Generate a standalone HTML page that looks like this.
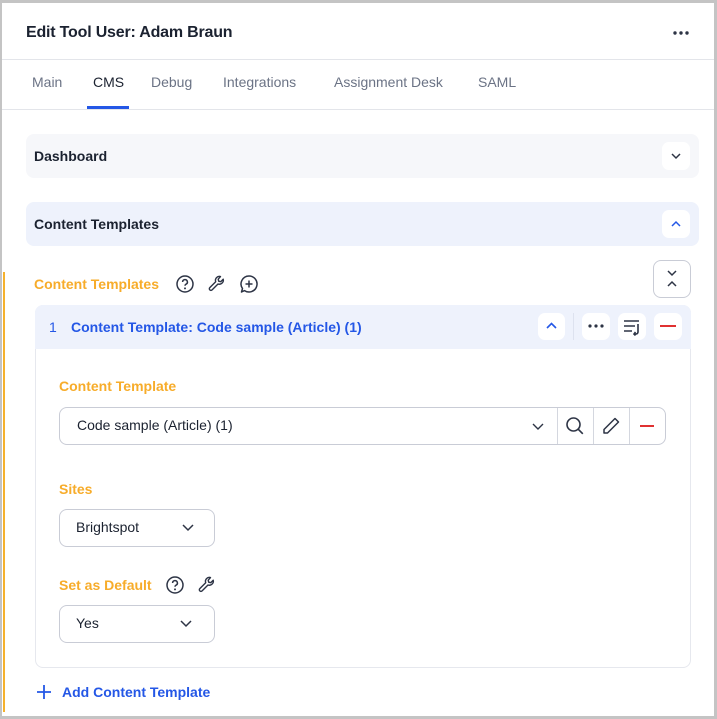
<!DOCTYPE html>
<html><head><meta charset="utf-8"><style>
*{box-sizing:border-box;margin:0;padding:0}
body{width:717px;height:719px;background:#c4c4c4;font-family:"Liberation Sans",sans-serif;position:relative;overflow:hidden}
.page{position:absolute;left:2px;top:3px;width:712px;height:713px;background:#fff}
.a{position:absolute}
.t{position:absolute;white-space:nowrap}
.btn{position:absolute;background:#fff;border-radius:7px}
svg{position:absolute}
</style></head><body>
<div class="page"></div>
<div class="t" style="left:26px;top:24px;font-size:16px;font-weight:bold;color:#1b2230;letter-spacing:-0.2px">Edit Tool User: Adam Braun</div>
<svg style="left:672px;top:30px" width="18" height="6"><circle cx="3" cy="3" r="1.7" fill="#2d3445"/><circle cx="9" cy="3" r="1.7" fill="#2d3445"/><circle cx="15" cy="3" r="1.7" fill="#2d3445"/></svg>
<div class="a" style="left:2px;top:59px;width:712px;height:1px;background:#e3e5ea"></div>
<div class="t" style="left:32px;top:74px;font-size:14px;color:#6b7385">Main</div>
<div class="t" style="left:93px;top:74px;font-size:14px;color:#1b2230">CMS</div>
<div class="t" style="left:151px;top:74px;font-size:14px;color:#6b7385">Debug</div>
<div class="t" style="left:223px;top:74px;font-size:14px;color:#6b7385">Integrations</div>
<div class="t" style="left:334px;top:74px;font-size:14px;color:#6b7385">Assignment Desk</div>
<div class="t" style="left:478px;top:74px;font-size:14px;color:#6b7385">SAML</div>
<div class="a" style="left:87px;top:106px;width:42px;height:3px;background:#2457e6"></div>
<div class="a" style="left:2px;top:109px;width:712px;height:1px;background:#e3e5ea"></div>

<div class="a" style="left:26px;top:134px;width:673px;height:44px;background:#f6f7fa;border-radius:8px"></div>
<div class="t" style="left:34px;top:148px;font-size:14px;font-weight:bold;color:#1b2230">Dashboard</div>
<div class="btn" style="left:662px;top:142px;width:28px;height:28px"></div>
<svg style="left:670px;top:150px" width="12" height="12"><path d="M2 4l4 4 4-4" fill="none" stroke="#2d3445" stroke-width="1.5"/></svg>

<div class="a" style="left:26px;top:202px;width:673px;height:44px;background:#eef2fc;border-radius:8px"></div>
<div class="t" style="left:34px;top:216px;font-size:14px;font-weight:bold;color:#1b2230">Content Templates</div>
<div class="btn" style="left:662px;top:210px;width:28px;height:28px"></div>
<svg style="left:670px;top:218px" width="12" height="12"><path d="M2 8l4-4 4 4" fill="none" stroke="#2457e6" stroke-width="1.5"/></svg>

<div class="a" style="left:3px;top:272px;width:2px;height:440px;background:#f5b12d"></div>
<div class="t" style="left:34px;top:276px;font-size:14px;font-weight:bold;color:#f7ac2a">Content Templates</div>
<svg style="left:175px;top:274px" width="20" height="20"><circle cx="10" cy="10" r="8" fill="none" stroke="#2d3445" stroke-width="1.5"/><path d="M7.6 8a2.4 2.4 0 1 1 3.4 2.2c-.7.4-1 .8-1 1.6" fill="none" stroke="#2d3445" stroke-width="1.5"/><circle cx="10" cy="14.4" r="1" fill="#2d3445"/></svg>
<svg style="left:207px;top:274px" width="20" height="20"><path d="M13.5 2.5a4 4 0 0 0-4.8 5.2L2.8 13.6a1.6 1.6 0 0 0 2.3 2.3l5.9-5.9a4 4 0 0 0 5.2-4.8l-2.5 2.5-2-.5-.5-2z" fill="none" stroke="#2d3445" stroke-width="1.4" stroke-linejoin="round"/></svg>
<svg style="left:239px;top:274px" width="20" height="20"><path d="M10 2a8 8 0 1 1-4.5 14.6L2.5 18l1-3.4A8 8 0 0 1 10 2z" fill="none" stroke="#2d3445" stroke-width="1.5" stroke-linejoin="round"/><path d="M10 6.5v7M6.5 10h7" stroke="#2d3445" stroke-width="1.5"/></svg>
<div class="a" style="left:653px;top:260px;width:38px;height:38px;border:1px solid #c9ccd6;border-radius:8px;background:#fff"></div>
<svg style="left:665px;top:268px" width="14" height="22"><path d="M3 3l4 4 4-4M3 18l4-4 4 4" fill="none" stroke="#2d3445" stroke-width="1.5"/></svg>

<div class="a" style="left:35px;top:305px;width:656px;height:363px;border:1px solid #e6e8ee;border-radius:8px"></div>
<div class="a" style="left:35px;top:305px;width:656px;height:44px;background:#eef2fc;border-radius:8px 8px 0 0"></div>
<div class="t" style="left:49px;top:319px;font-size:14px;color:#2457e6">1</div>
<div class="t" style="left:71px;top:319px;font-size:14px;font-weight:bold;color:#2457e6">Content Template: Code sample (Article) (1)</div>
<div class="btn" style="left:538px;top:313px;width:27px;height:27px"></div>
<svg style="left:545px;top:320px" width="13" height="12"><path d="M2 8l4.5-4.5L11 8" fill="none" stroke="#2457e6" stroke-width="1.6"/></svg>
<div class="a" style="left:573px;top:313px;width:1px;height:27px;background:#dde2ef"></div>
<div class="btn" style="left:582px;top:313px;width:28px;height:27px"></div>
<svg style="left:587px;top:323px" width="18" height="6"><circle cx="3" cy="3" r="1.6" fill="#2d3445"/><circle cx="9" cy="3" r="1.6" fill="#2d3445"/><circle cx="15" cy="3" r="1.6" fill="#2d3445"/></svg>
<div class="btn" style="left:618px;top:313px;width:28px;height:27px"></div>
<svg style="left:622px;top:318px" width="20" height="18"><path d="M2 3h15M2 8h11M2 13h8M16 6v8a2 2 0 0 1-2 2h-2M13.5 14l-1.5 2 1.5 1.5" fill="none" stroke="#2d3445" stroke-width="1.6"/></svg>
<div class="btn" style="left:654px;top:313px;width:28px;height:27px"></div>
<div class="a" style="left:660px;top:325px;width:16px;height:2px;background:#e03131"></div>

<div class="t" style="left:59px;top:378px;font-size:14px;font-weight:bold;color:#f7ac2a">Content Template</div>
<div class="a" style="left:59px;top:407px;width:607px;height:38px;border:1px solid #c9ccd6;border-radius:8px"></div>
<div class="t" style="left:77px;top:417px;font-size:14px;color:#1b2230">Code sample (Article) (1)</div>
<svg style="left:531px;top:420px" width="14" height="12"><path d="M2 4l5 5 5-5" fill="none" stroke="#2d3445" stroke-width="1.4"/></svg>
<div class="a" style="left:557px;top:408px;width:1px;height:36px;background:#d4d7df"></div>
<div class="a" style="left:593px;top:408px;width:1px;height:36px;background:#d4d7df"></div>
<div class="a" style="left:629px;top:408px;width:1px;height:36px;background:#d4d7df"></div>
<svg style="left:565px;top:416px" width="20" height="20"><circle cx="8.5" cy="8.5" r="6.5" fill="none" stroke="#2d3445" stroke-width="1.6"/><path d="M13.3 13.3l4.5 4.5" stroke="#2d3445" stroke-width="1.6"/></svg>
<svg style="left:601px;top:416px" width="20" height="20"><path d="M14 2.5l3.5 3.5L6.5 17H3v-3.5z" fill="none" stroke="#2d3445" stroke-width="1.5" stroke-linejoin="round"/></svg>
<div class="a" style="left:640px;top:425px;width:14px;height:2px;background:#e03131"></div>

<div class="t" style="left:59px;top:481px;font-size:14px;font-weight:bold;color:#f7ac2a">Sites</div>
<div class="a" style="left:59px;top:509px;width:156px;height:38px;border:1px solid #c9ccd6;border-radius:8px"></div>
<div class="t" style="left:76px;top:519px;font-size:14px;color:#1b2230">Brightspot</div>
<svg style="left:181px;top:522px" width="14" height="12"><path d="M2 3l5 5 5-5" fill="none" stroke="#2d3445" stroke-width="1.5"/></svg>

<div class="t" style="left:59px;top:577px;font-size:14px;font-weight:bold;color:#f7ac2a">Set as Default</div>
<svg style="left:165px;top:575px" width="20" height="20"><circle cx="10" cy="10" r="8" fill="none" stroke="#2d3445" stroke-width="1.5"/><path d="M7.6 8a2.4 2.4 0 1 1 3.4 2.2c-.7.4-1 .8-1 1.6" fill="none" stroke="#2d3445" stroke-width="1.5"/><circle cx="10" cy="14.4" r="1" fill="#2d3445"/></svg>
<svg style="left:197px;top:575px" width="20" height="20"><path d="M13.5 2.5a4 4 0 0 0-4.8 5.2L2.8 13.6a1.6 1.6 0 0 0 2.3 2.3l5.9-5.9a4 4 0 0 0 5.2-4.8l-2.5 2.5-2-.5-.5-2z" fill="none" stroke="#2d3445" stroke-width="1.4" stroke-linejoin="round"/></svg>
<div class="a" style="left:59px;top:605px;width:156px;height:38px;border:1px solid #c9ccd6;border-radius:8px"></div>
<div class="t" style="left:76px;top:615px;font-size:14px;color:#1b2230">Yes</div>
<svg style="left:179px;top:618px" width="14" height="12"><path d="M2 3l5 5 5-5" fill="none" stroke="#2d3445" stroke-width="1.5"/></svg>

<svg style="left:36px;top:684px" width="16" height="16"><path d="M8 1v14M1 8h14" stroke="#2457e6" stroke-width="1.8"/></svg>
<div class="t" style="left:62px;top:684px;font-size:14px;font-weight:bold;color:#2457e6">Add Content Template</div>
</body></html>
